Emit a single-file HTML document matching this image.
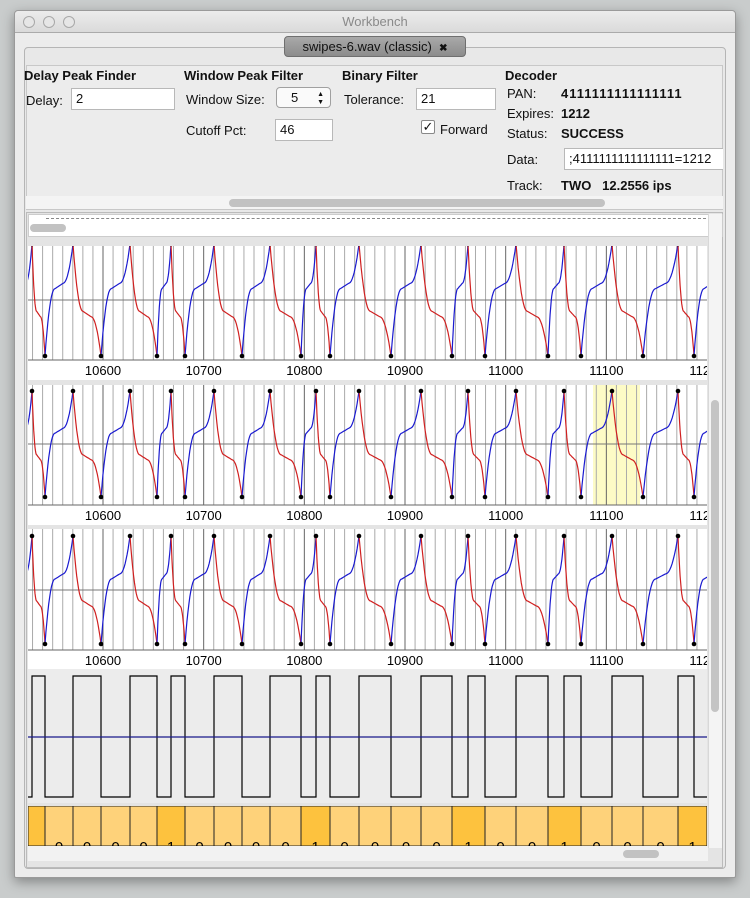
<!DOCTYPE html>
<html><head><meta charset="utf-8"><style>
*{margin:0;padding:0;box-sizing:border-box}
body{width:750px;height:898px;background:#c9cccc;position:relative;overflow:hidden;font-family:"Liberation Sans",sans-serif;font-size:13px;color:#111}
.a{position:absolute}
.win{left:14px;top:10px;width:722px;height:868px;background:#ececec;border:1px solid #9a9a9a;border-radius:4px 4px 2px 2px;box-shadow:0 4px 12px rgba(0,0,0,.35)}
.title{left:0;top:0;width:720px;height:22px;background:linear-gradient(#ececec,#dadada);border-bottom:1px solid #aaa;border-radius:4px 4px 0 0;text-align:center;line-height:22px;color:#8a8a8a;font-size:13px}
.dot{width:12px;height:12px;border-radius:50%;border:1px solid #a8a8a8;background:#e6e6e6;top:5px}
.h{font-weight:bold}
.tf{background:#fff;border:1px solid #b8b8b8;height:22px;line-height:20px;padding-left:4px}
</style></head><body>
<div class="a win">
 <div class="a title">Workbench
  <div class="a dot" style="left:8px"></div><div class="a dot" style="left:28px"></div><div class="a dot" style="left:48px"></div>
 </div>
</div>
<div class="a" style="left:24px;top:47px;width:702px;height:822px;border:1px solid #b5b5b5;border-radius:4px;background:#e8e8e8"></div>
<div class="a" style="left:284px;top:36px;width:182px;height:21px;background:linear-gradient(#a9a9a9,#8c8c8c);border:1px solid #6f6f6f;border-radius:4px;text-align:center;line-height:20px;color:#111;font-size:13px">swipes-6.wav (classic) &nbsp;<b style="font-size:10px">✖</b></div>
<div class="a" style="left:26px;top:65px;width:697px;height:145px;background:#ececec;border:1px solid #c8c8c8"></div>
<div class="a h" style="left:24px;top:68px">Delay Peak Finder</div>
<div class="a" style="left:26px;top:93px">Delay:</div>
<div class="a tf" style="left:71px;top:88px;width:104px">2</div>
<div class="a h" style="left:184px;top:68px">Window Peak Filter</div>
<div class="a" style="left:186px;top:92px">Window Size:</div>
<div class="a" style="left:276px;top:87px;width:55px;height:21px;border:1px solid #a0a0a0;border-radius:4px;background:#fafafa;line-height:19px;padding-left:14px">5<span style="position:absolute;right:6px;top:0;font-size:7px;line-height:8px;padding-top:3px">▲<br>▼</span></div>
<div class="a" style="left:186px;top:123px">Cutoff Pct:</div>
<div class="a tf" style="left:275px;top:119px;width:58px">46</div>
<div class="a h" style="left:342px;top:68px">Binary Filter</div>
<div class="a" style="left:344px;top:92px">Tolerance:</div>
<div class="a tf" style="left:416px;top:88px;width:80px">21</div>
<div class="a" style="left:421px;top:120px;width:14px;height:14px;border:1px solid #888;border-radius:2px;background:#fff;font-size:13px;line-height:12px;text-align:center">✓</div>
<div class="a" style="left:440px;top:122px">Forward</div>
<div class="a h" style="left:505px;top:68px">Decoder</div>
<div class="a" style="left:507px;top:86px">PAN:</div><div class="a h" style="left:561px;top:86px;letter-spacing:1px">4111111111111111</div>
<div class="a" style="left:507px;top:106px">Expires:</div><div class="a h" style="left:561px;top:106px">1212</div>
<div class="a" style="left:507px;top:126px">Status:</div><div class="a h" style="left:561px;top:126px">SUCCESS</div>
<div class="a" style="left:507px;top:152px">Data:</div>
<div class="a tf" style="left:564px;top:148px;width:159px;overflow:hidden;white-space:nowrap;border-right:none">;4111111111111111=1212</div>
<div class="a" style="left:507px;top:178px">Track:</div><div class="a h" style="left:561px;top:178px">TWO &nbsp; 12.2556 ips</div>
<div class="a" style="left:26px;top:196px;width:697px;height:13px;background:#f4f4f4"></div>
<div class="a" style="left:229px;top:199px;width:376px;height:8px;border-radius:4px;background:#c2c2c2"></div>
<div class="a" style="left:26px;top:212px;width:697px;height:656px;background:#e4e4e4;border:1px solid #bbb"></div>
<div class="a" style="left:28px;top:214px;width:695px;height:23px;background:#fff;border:1px solid #ccc"></div>
<div class="a" style="left:46px;top:218px;width:660px;border-top:1px dashed #888"></div>
<div class="a" style="left:30px;top:224px;width:36px;height:8px;border-radius:4px;background:#c2c2c2"></div>
<div class="a" style="left:708px;top:214px;width:14px;height:634px;background:#f4f4f4;border-left:1px solid #d8d8d8"></div>
<div class="a" style="left:711px;top:400px;width:8px;height:312px;border-radius:4px;background:#c4c4c4"></div>
<div class="a" style="left:28px;top:846px;width:680px;height:15px;background:#f2f2f2"></div>
<div class="a" style="left:623px;top:850px;width:36px;height:8px;border-radius:4px;background:#c2c2c2"></div>
<svg id="s" class="a" style="left:0;top:0" width="750" height="898"></svg>
<script>
var T=[32,45,73,101,130,157,171,185,214,242,270,301,316,330,359,391,421,452,468,485,516,548,564,581,612,643,678,694];
var L=28,R=707;
function X(v){return 103+(v-10600)*1.0067;}
var o='<clipPath id="cw"><rect x="28" y="0" width="679" height="898"/></clipPath>';
function chart(top,bot,cy,amp,hl){
 o+='<rect x="'+L+'" y="'+top+'" width="'+(R-L)+'" height="'+(bot-top+20)+'" fill="#fff"/>';
 if(hl)o+='<rect x="593" y="'+top+'" width="47" height="'+(bot-top)+'" fill="#fdfbc6"/>';
 for(var v=10530;v<=11210;v+=10){var x=X(v);if(x<L||x>R)continue;var mj=v%100==0;
  o+='<line x1="'+x+'" y1="'+top+'" x2="'+x+'" y2="'+bot+'" stroke="'+(mj?'#666':'#aaa')+'" stroke-width="1"/>';}
 o+='<line x1="'+L+'" y1="'+cy+'" x2="'+R+'" y2="'+cy+'" stroke="#777"/>';
 o+='<line x1="'+L+'" y1="'+bot+'" x2="'+R+'" y2="'+bot+'" stroke="#666"/>';
 o+='<g clip-path="url(#cw)">';
 for(var v=10600;v<=11200;v+=100){o+='<text x="'+X(v)+'" y="'+(bot+15)+'" text-anchor="middle" font-size="13" font-family="Liberation Sans,sans-serif">'+v+'</text>';}
 o+='</g><clipPath id="c'+top+'"><rect x="'+L+'" y="'+top+'" width="'+(R-L)+'" height="'+(bot-top)+'"/></clipPath><g clip-path="url(#c'+top+')">';
 var pts=[14].concat(T).concat([722]);
 for(var i=0;i<pts.length-1;i++){var x0=pts[i],x1=pts[i+1];var up=(i%2==1);
  var s0=up?1:-1;var d='';
  for(var k=0;k<=30;k++){var t=k/30;var val;
   if(t<0.35){var s=t/0.35;val=1-1.2*(1-(1-s)*(1-s));}
   else if(t<0.65){var s=(t-0.35)/0.3;val=-0.2-0.1*s;}
   else{var s=(t-0.65)/0.35;val=-0.3-0.7*s*s;}
   val*=s0;var x=x0+(x1-x0)*t;d+=(k?'L':'M')+x.toFixed(1)+' '+(cy-val*amp).toFixed(1);}
  o+='<path d="'+d+'" fill="none" stroke="'+(s0>0?'#d02020':'#1a1ad0')+'" stroke-width="1.2"/>';
  o+='<circle cx="'+x0+'" cy="'+(cy-s0*amp)+'" r="2.3" fill="#000"/>';}
 o+='</g>';
}
chart(246,360,300,56,0);
chart(385,505,444,53,1);
chart(529,650,590,54,0);
o+='<rect x="28" y="669" width="679" height="134" fill="#ececec"/>';
var d='M28 797',lv=0;for(var i=0;i<T.length;i++){var y0=lv?676:797;lv=1-lv;var y1=lv?676:797;d+='L'+T[i]+' '+y0+'L'+T[i]+' '+y1;}d+='L707 '+(lv?676:797);
o+='<path d="'+d+'" fill="none" stroke="#000" stroke-width="1.2"/>';
o+='<line x1="28" y1="737" x2="707" y2="737" stroke="#1a1a8a" stroke-width="1.3"/>';
var C=[[28,45,1],[45,73,0],[73,101,0],[101,130,0],[130,157,0],[157,185,1],[185,214,0],[214,242,0],[242,270,0],[270,301,0],[301,330,1],[330,359,0],[359,391,0],[391,421,0],[421,452,0],[452,485,1],[485,516,0],[516,548,0],[548,581,1],[581,612,0],[612,643,0],[643,678,0],[678,707,1]];
o+='<clipPath id="cb"><rect x="28" y="806" width="679" height="40"/></clipPath><g clip-path="url(#cb)">';
C.forEach(function(c){o+='<rect x="'+c[0]+'" y="806" width="'+(c[1]-c[0])+'" height="40" fill="'+(c[2]?'#fdc23e':'#fed27a')+'" stroke="#222" stroke-width="1"/>';
 o+='<text x="'+((c[0]+c[1])/2+(c[0]==28?-10:0))+'" y="852" text-anchor="middle" font-size="15" font-family="Liberation Sans,sans-serif">'+c[2]+'</text>';});
o+='</g>';
document.getElementById('s').innerHTML=o;
</script>
</body></html>
